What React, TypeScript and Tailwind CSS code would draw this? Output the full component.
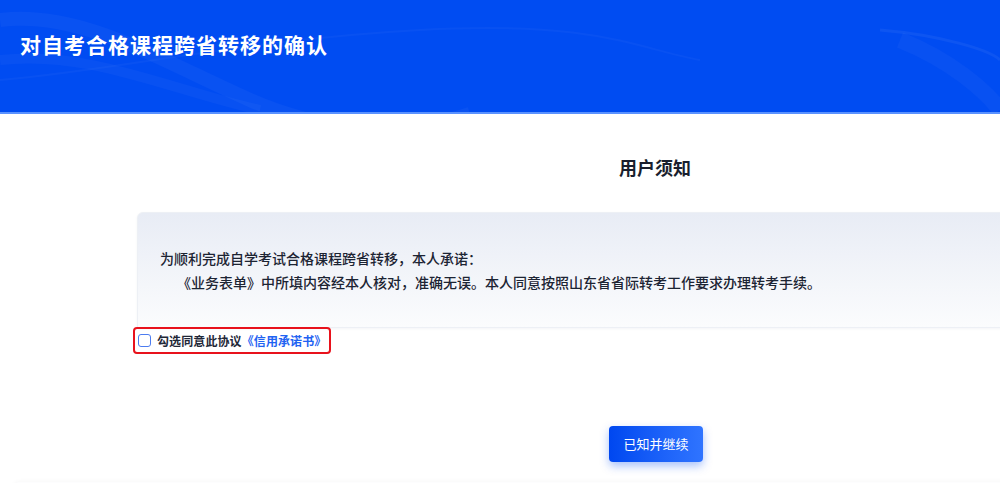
import React from "react";

export default function App() {
  return (
    <div
      className="w-[1000px] h-[483px] overflow-hidden bg-white"
      style={{ fontFamily: '"Noto Sans CJK SC", "Noto Sans", sans-serif' }}
    >
      <header className="relative h-[114px] overflow-hidden bg-[#004cf2] border-b-[2px] border-[#5a92ff]">
        <svg
          className="absolute inset-0 pointer-events-none"
          width="1000"
          height="114"
          viewBox="0 0 1000 114"
          fill="none"
        >
          <path d="M0 20 C 80 10, 160 60, 250 100 S 420 130, 470 114" stroke="#ffffff" strokeOpacity="0.035" strokeWidth="14" />
          <path d="M0 60 C 90 50, 170 90, 260 110" stroke="#ffffff" strokeOpacity="0.03" strokeWidth="10" />
          <path d="M0 80 C 120 70, 240 40, 420 30 S 640 50, 700 60" stroke="#ffffff" strokeOpacity="0.03" strokeWidth="2" />
          <path d="M880 30 C 940 35, 990 50, 1000 60" stroke="#ffffff" strokeOpacity="0.05" strokeWidth="3" />
          <path d="M900 40 C 950 60, 985 90, 1000 110" stroke="#ffffff" strokeOpacity="0.03" strokeWidth="16" />
        </svg>
        <h1 className="relative pl-[20px] pt-[30px] text-[21px] leading-[28px] font-bold tracking-[1px] text-white">
          对自考合格课程跨省转移的确认
        </h1>
      </header>

      <main className="w-[1036px] ml-[137px]">
        <h2 className="mt-[40px] text-center text-[18px] leading-[26px] font-bold text-[#1a1f2e]">
          用户须知
        </h2>

        <div className="mt-[32px] h-[116px] rounded-tl-[6px] border border-[#edf0f5] bg-gradient-to-b from-[#e8ecf5] to-[#fbfcfd] pt-[33px] pl-[22px] text-[14px] leading-[24px] font-medium text-[#1c2433] shadow-[0_1px_3px_rgba(30,50,90,0.05)]">
          <p>为顺利完成自学考试合格课程跨省转移，本人承诺：</p>
          <p className="pl-[17px]">
            《业务表单》中所填内容经本人核对，准确无误。本人同意按照山东省省际转考工作要求办理转考手续。
          </p>
        </div>

        <div className="-mt-[3px] -ml-[4px] inline-flex h-[27px] items-center gap-[6px] rounded-[4px] border-2 border-[#e8121c] pl-[3px] pr-[3px]">
          <span className="h-[13px] w-[13px] rounded-[3px] border-[1.5px] border-[#4c7cf0] bg-white" />
          <span className="text-[12px] leading-[16px] font-bold tracking-[0.1px] text-[#1f2838]">
            勾选同意此协议<span className="text-[#1f63f2]">《信用承诺书》</span>
          </span>
        </div>

        <div className="mt-[72px] flex justify-center">
          <button className="ml-[2px] h-[36px] w-[94px] rounded-[4px] bg-gradient-to-r from-[#0047f0] to-[#2f74ff] text-[13px] text-white shadow-[0_4px_10px_rgba(0,76,242,0.35)]">
            已知并继续
          </button>
        </div>

        <div className="mt-[20px] -ml-[124px] h-[40px] rounded-t-[6px] bg-[#fdfdfe] shadow-[0_-1px_4px_rgba(0,0,0,0.03)]" />
      </main>
    </div>
  );
}
